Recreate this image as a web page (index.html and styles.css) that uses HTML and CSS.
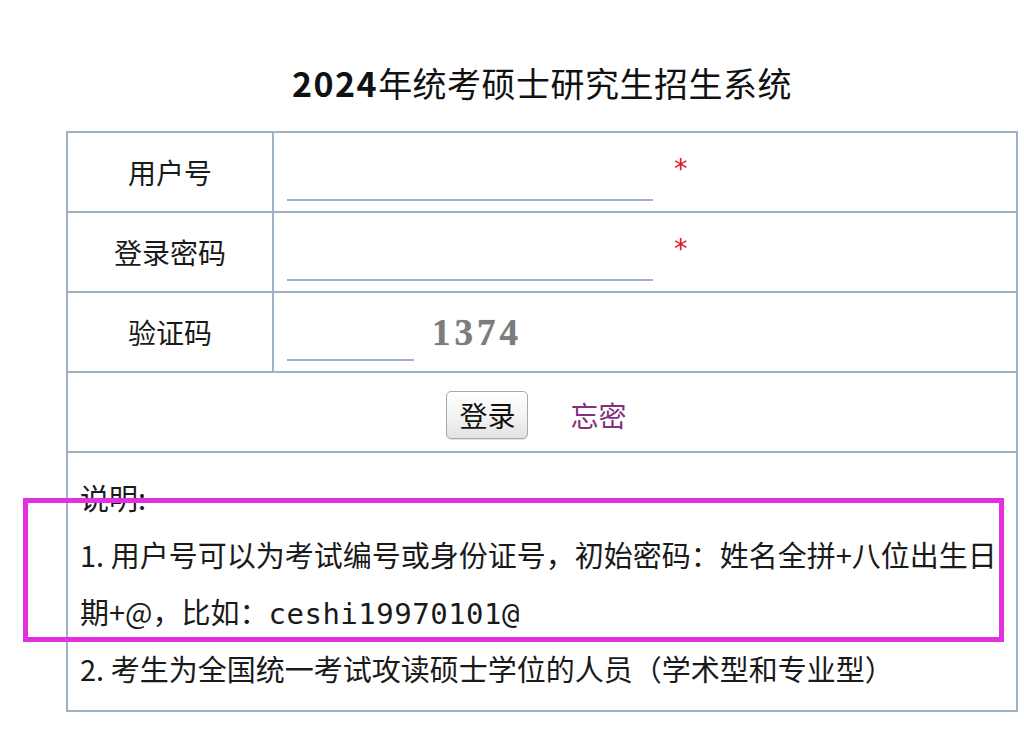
FILE: index.html
```html
<!DOCTYPE html>
<html lang="zh-CN">
<head>
<meta charset="utf-8">
<title>2024年统考硕士研究生招生系统</title>
<link rel="stylesheet" href="styles.css">
</head>
<body>
<div class="page">
  <h1 class="title"><b class="year">2024</b>年统考硕士研究生招生系统</h1>
  <table class="login">
    <tr>
      <td class="label">用户号</td>
      <td class="field-cell">
        <div class="field">
          <input class="line-input" type="text">
          <span class="req">*</span>
        </div>
      </td>
    </tr>
    <tr>
      <td class="label">登录密码</td>
      <td class="field-cell">
        <div class="field">
          <input class="line-input" type="password">
          <span class="req">*</span>
        </div>
      </td>
    </tr>
    <tr>
      <td class="label">验证码</td>
      <td class="field-cell">
        <div class="field">
          <input class="line-input short" type="text">
          <span class="captcha">1374</span>
        </div>
      </td>
    </tr>
    <tr>
      <td class="actions" colspan="2">
        <div class="action-row">
          <button class="btn" type="button">登录</button>
          <a class="forgot" href="#">忘密</a>
        </div>
      </td>
    </tr>
    <tr>
      <td class="notes" colspan="2">
        <p>说明:</p>
        <p>1. 用户号可以为考试编号或身份证号，初始密码：姓名全拼+八位出生日期+@，比如：<span class="example">ceshi19970101@</span></p>
        <p>2. 考生为全国统一考试攻读硕士学位的人员（学术型和专业型）</p>
      </td>
    </tr>
  </table>
</div>
<div class="highlight"></div>
</body>
</html>
```
FILE: styles.css
```css
html, body {
  margin: 0;
  padding: 0;
  background: #ffffff;
}
body {
  position: relative;
  font-family: "Noto Sans CJK SC", "Noto Sans", sans-serif;
  color: #1a1a1a;
}
.page {
  width: 952px;
  margin-left: 66px;
}
.title {
  margin: 63px 0 28px;
  font-size: 34px;
  line-height: 40px;
  font-weight: 400;
  text-align: center;
  color: #111;
  letter-spacing: 0.5px;
}
.year {
  font-weight: 700;
  letter-spacing: 1.5px;
}
.login {
  width: 952px;
  border-collapse: collapse;
  border: 2px solid #9fb1c3;
}
.login td {
  border: 2px solid #9fb1c3;
  padding: 0;
}
.label {
  width: 204px;
  height: 78px;
  text-align: center;
  font-size: 28px;
  color: #1a1a1a;
}
.field-cell {
  height: 78px;
  vertical-align: top;
}
.field {
  display: flex;
  align-items: flex-start;
  padding-left: 13px;
}
.line-input {
  width: 366px;
  height: 26px;
  margin-top: 40px;
  border: none;
  border-bottom: 2px solid #9fb1c3;
  outline: none;
  padding: 0;
  background: transparent;
  font-size: 20px;
}
.line-input.short {
  width: 127px;
}
.req {
  margin-left: 21px;
  margin-top: 22px;
  font-family: "DejaVu Sans", sans-serif;
  font-size: 27px;
  line-height: 28px;
  color: #e0151d;
}
.captcha {
  margin-left: 18px;
  margin-top: 20px;
  font-family: "Liberation Serif", serif;
  font-weight: 700;
  font-size: 37px;
  line-height: 40px;
  letter-spacing: 4px;
  color: #7c7c7c;
  text-shadow: 0 0 1px #a0a0a0;
}
.actions {
  height: 78px;
  vertical-align: top;
}
.action-row {
  display: flex;
  justify-content: center;
  align-items: center;
  gap: 42px;
  padding-top: 18px;
  padding-right: 11px;
}
.btn {
  width: 82px;
  height: 48px;
  padding: 0;
  border: 1px solid #a9a9a9;
  border-radius: 5px;
  background: linear-gradient(#ffffff, #f2f2f2 55%, #e2e2e2);
  box-shadow: 0 1px 1px rgba(0,0,0,0.12);
  font-family: "Noto Sans CJK SC", sans-serif;
  font-size: 28px;
  color: #111;
}
.forgot {
  font-size: 28px;
  color: #82327c;
  text-decoration: none;
}
.notes {
  padding: 16px 4px 13px 12px !important;
  font-size: 29px;
  line-height: 57px;
  color: #1a1a1a;
}
.notes p {
  margin: 0;
}
.example {
  font-family: "DejaVu Sans Mono", monospace;
  font-size: 29px;
  line-height: 1;
  letter-spacing: 0.5px;
}
.highlight {
  position: absolute;
  left: 23px;
  top: 498px;
  width: 971px;
  height: 134px;
  border: 5px solid #e22fe0;
  pointer-events: none;
}
```
